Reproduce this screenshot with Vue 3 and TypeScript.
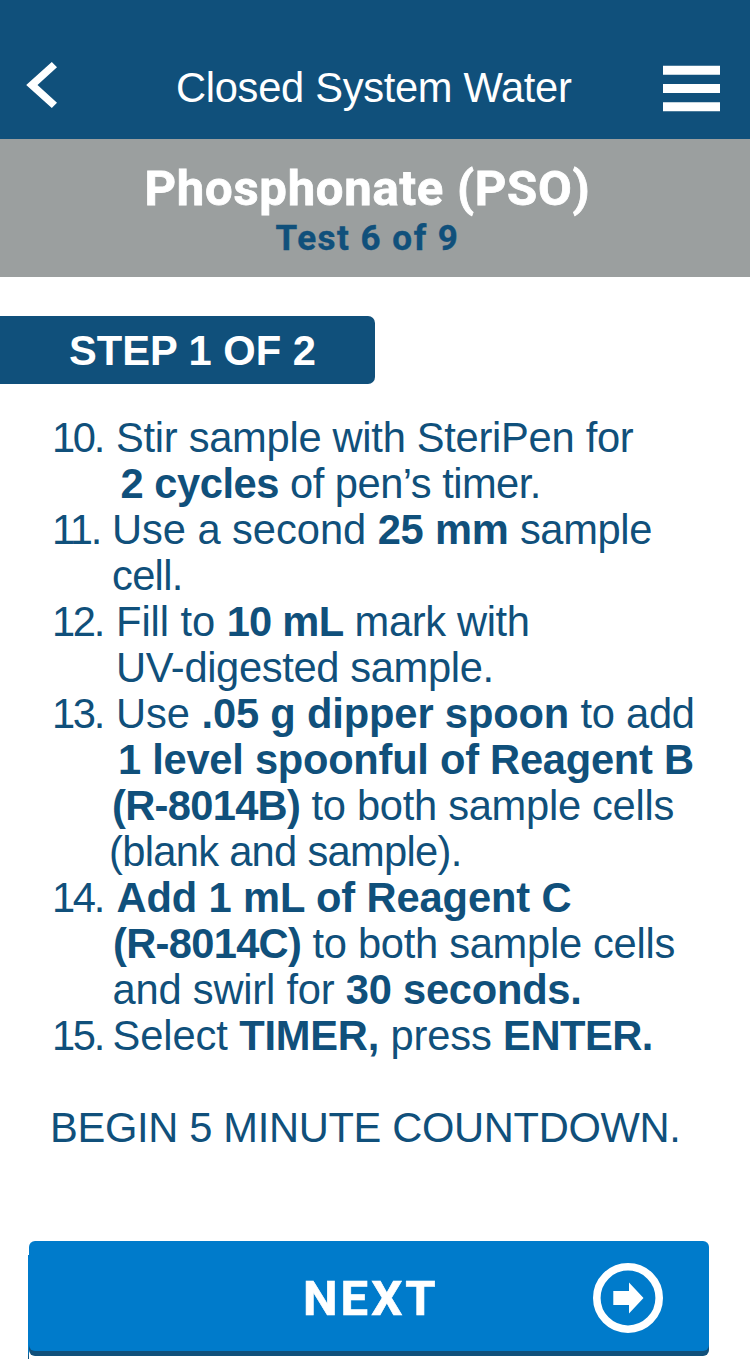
<script setup lang="ts">
interface Run {
  text: string
  tracking: number
  bold?: boolean
}

interface Line {
  indent: number
  runs: Run[]
}

interface Step {
  number: number
  lines: Line[]
}

const r = (text: string, tracking = 0): Run => ({ text, tracking })
const b = (text: string, tracking = 0): Run => ({ text, tracking, bold: true })
const line = (indent: number, ...runs: Run[]): Line => ({ indent, runs })

const steps: Step[] = [
  { number: 10, lines: [
    line(64, r('Stir sample with SteriPen for', -0.28)),
    line(68.5, b('2 cycles', -0.45), r(' of pen’s timer.', -0.52)),
  ] },
  { number: 11, lines: [
    line(60, r('Use a second ', -0.05), b('25 mm', -0.2), r(' sample', -0.35)),
    line(60, r('cell.', -0.7)),
  ] },
  { number: 12, lines: [
    line(64, r('Fill to ', -0.05), b('10 mL', -0.75), r(' mark with', -0.35)),
    line(64, r('UV-digested sample.', -0.35)),
  ] },
  { number: 13, lines: [
    line(64, r('Use ', -0.05), b('.05 g dipper spoon', -0.15), r(' to add', -0.25)),
    line(66, b('1 level spoonful of Reagent B', -0.26)),
    line(60, b('(R-8014B)', -0.7), r(' to both sample cells', -0.28)),
    line(57, r('(blank and sample).', -0.7)),
  ] },
  { number: 14, lines: [
    line(64.5, b('Add 1 mL of Reagent C', -0.12)),
    line(61, b('(R-8014C)', -0.7), r(' to both sample cells', -0.28)),
    line(60.5, r('and swirl for ', -0.2), b('30 seconds.', -0.25)),
  ] },
  { number: 15, lines: [
    line(60.5, r('Select ', -0.1), b('TIMER,', -0.2), r(' press ', -0.15), b('ENTER.', -0.5)),
  ] },
]
</script>

<template>
  <main class="screen">
    <header class="topbar">
      <button class="icon-button back" aria-label="Back">
        <svg width="32" height="48" viewBox="0 0 32 48">
          <path d="M.2 24 25.8 1 31 6.2 11.5 24 31 41.8 25.8 47z" fill="#fff" />
        </svg>
      </button>
      <h1 class="title">Closed System Water</h1>
      <button class="icon-button menu" aria-label="Menu">
        <svg width="57" height="47" viewBox="0 0 57 47">
          <path d="M0 .7h57v9H0zM0 19h57v9H0zM0 37.2h57v9H0z" fill="#fff" />
        </svg>
      </button>
    </header>

    <section class="test">
      <h2 class="test-name">Phosphonate (PSO)</h2>
      <p class="test-count">Test 6 of 9</p>
    </section>

    <div class="step-tab">STEP 1 OF 2</div>

    <ol class="steps">
      <li v-for="step in steps" :key="step.number" class="step">
        <span class="number">{{ step.number }}.</span>
        <div class="lines">
          <p
            v-for="(item, i) in step.lines"
            :key="i"
            class="line"
            :style="{ marginLeft: `${item.indent}px` }"
          ><span
            v-for="(run, j) in item.runs"
            :key="j"
            :class="{ bold: run.bold }"
            :style="{ letterSpacing: `${run.tracking}px` }"
          >{{ run.text }}</span></p>
        </div>
      </li>
    </ol>

    <p class="countdown">BEGIN 5 MINUTE COUNTDOWN.</p>

    <button class="next">
      <span class="next-label">NEXT</span>
      <svg class="next-icon" width="70" height="70" viewBox="0 0 70 70">
        <circle cx="35" cy="35" r="31.2" fill="none" stroke="#fff" stroke-width="7.6" />
        <path d="M20.3 28H36v-8.5L50.5 35 36 50.5V42H20.3z" fill="#fff" />
      </svg>
    </button>
  </main>
</template>

<style>
body {
  margin: 0;
  background: #fff;
}
</style>

<style scoped>
.screen {
  width: 750px;
  height: 1366px;
  overflow: hidden;
  display: flex;
  flex-direction: column;
  background: #fff;
  color: #10507b;
  font-family: "Liberation Sans", Arial, sans-serif;
  font-size: 41.67px;
  line-height: 46px;
}

h1,
h2,
p,
ol {
  margin: 0;
  padding: 0;
}

button {
  border: 0;
  padding: 0;
  background: none;
}

.topbar {
  box-sizing: border-box;
  flex: none;
  height: 139px;
  padding: 61px 30px 0 26px;
  display: flex;
  align-items: flex-start;
  background: #10507b;
  color: #fff;
}

.icon-button {
  display: flex;
}

.menu {
  padding-top: 4px;
}

.title {
  flex: 1;
  margin: 4px 0 0 118px;
  font-size: 41.67px;
  font-weight: 400;
  letter-spacing: -0.3px;
  white-space: nowrap;
}

.test {
  box-sizing: border-box;
  flex: none;
  height: 138px;
  padding: 21px 15px 0 0;
  background: #9b9f9f;
  text-align: center;
  font-family: Roboto, sans-serif;
  font-weight: 700;
  white-space: nowrap;
}

.test-name {
  color: #fff;
  font-size: 49px;
  line-height: 58px;
  letter-spacing: 0.75px;
  -webkit-text-stroke: 0.8px currentColor;
}

.test-count {
  font-size: 35px;
  line-height: 42px;
  letter-spacing: 1.5px;
  -webkit-text-stroke: 0.4px currentColor;
}

.step-tab {
  box-sizing: border-box;
  flex: none;
  width: 375px;
  height: 68px;
  margin-top: 39px;
  padding-left: 69px;
  border-radius: 0 7px 7px 0;
  background: #10507b;
  color: #fff;
  font-weight: 700;
  line-height: 69px;
  white-space: nowrap;
}

.steps {
  margin: 31px 0 0 52px;
  list-style: none;
}

.step {
  display: grid;
  grid-template-columns: 0 1fr;
}

.number,
.line {
  white-space: pre;
}

.number {
  letter-spacing: -2.3px;
}

.bold {
  font-weight: 700;
}

.countdown {
  margin: 46px 0 0 50px;
  letter-spacing: -0.33px;
  white-space: nowrap;
}

.next {
  box-sizing: border-box;
  position: relative;
  flex: none;
  width: 680px;
  height: 110px;
  margin: 90px 0 0 29px;
  padding: 4px 46px 0 274px;
  display: flex;
  align-items: center;
  justify-content: space-between;
  border-radius: 6px;
  background: #007bcb;
  box-shadow: 0 5px #10507b;
  color: #fff;
}

/* Thin edge running down the button's left side */
.next::before {
  content: "";
  position: absolute;
  left: -1px;
  top: 14px;
  width: 1px;
  height: 104px;
  background: linear-gradient(#007bcb 96px, #10507b 102px);
}

.next-label {
  font-family: Roboto, sans-serif;
  font-size: 49px;
  font-weight: 700;
  letter-spacing: 3px;
  -webkit-text-stroke: 0.6px currentColor;
}
</style>
